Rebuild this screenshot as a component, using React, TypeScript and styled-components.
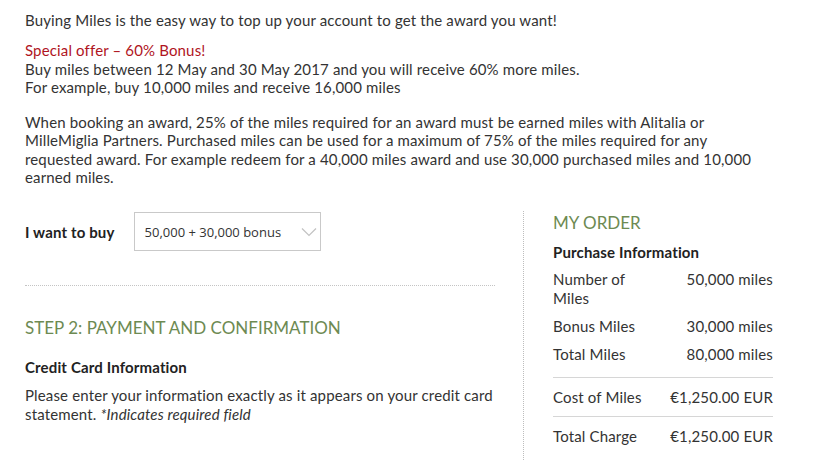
import React from 'react';
import styled, { createGlobalStyle } from 'styled-components';

const GlobalStyle = createGlobalStyle`
  body {
    margin: 0;
    background: #fff;
    font-family: Lato, "Open Sans", sans-serif;
    color: #333;
  }
`;

const Colors = {
  Text: '#333333',
  Green: '#6d8a52',
  Red: '#b0141e',
  Line: '#d6d6d6',
};

const Page = styled.div`
  padding: 11px 25px 0 25px;
  width: 770px;
  font-size: 15px;
  line-height: 18.3px;
  letter-spacing: 0.15px;
`;

const Para = styled.p<{ $gap?: number }>`
  margin: 0 0 ${(p) => p.$gap ?? 0}px 0;
  max-width: 735px;
`;

const Offer = styled.span`
  display: block;
  color: ${Colors.Red};
`;

const Columns = styled.div`
  display: flex;
  margin-top: 25px;
`;

const LeftCol = styled.div`
  width: 470px;
  padding-top: 1px;
`;

const RightCol = styled.div`
  margin-left: 28px;
  border-left: 1px dotted #bdbdbd;
  padding: 1px 0 0 29px;
  width: 220px;
  height: 260px;
`;

const BuyRow = styled.div`
  display: flex;
  align-items: center;
  gap: 19px;
  padding-bottom: 34px;
  border-bottom: 1px dotted #c4c4c4;
`;

const Label = styled.span`
  font-weight: 700;
  color: #222;
`;

const Select = styled.div`
  display: flex;
  align-items: center;
  justify-content: space-between;
  box-sizing: border-box;
  width: 187px;
  height: 39px;
  border: 1px solid #c9c9c9;
  padding: 0 3px 0 10px;
  font-family: "Open Sans", sans-serif;
  font-size: 13px;
  letter-spacing: 0;
  color: #333;
`;

const Heading = styled.h2<{ $top?: number }>`
  margin: ${(p) => p.$top ?? 0}px 0 0 0;
  font-weight: 400;
  font-size: 17px;
  line-height: 22px;
  letter-spacing: 0;
  color: ${Colors.Green};
`;

const SubHeading = styled.h3<{ $top?: number }>`
  margin: ${(p) => p.$top ?? 0}px 0 0 0;
  font-size: 15px;
  font-weight: 700;
  color: #222;
  line-height: 18px;
`;

const Note = styled.p`
  margin: 10px 0 0 0;
`;

const OrderTable = styled.div`
  display: grid;
  grid-template-columns: 100px 1fr;
  margin-top: 9px;
`;

const Cell = styled.div<{ $value?: boolean; $divider?: boolean; $space?: number }>`
  margin-top: ${(p) => p.$space ?? 0}px;
  padding: ${(p) => (p.$divider ? '10px' : '0')} 0 10px 0;
  text-align: ${(p) => (p.$value ? 'right' : 'left')};
  border-top: ${(p) => (p.$divider ? `1px solid ${Colors.Line}` : 'none')};
`;

const Chevron = () => (
  <svg width="16" height="10" viewBox="0 0 16 10" fill="none">
    <path d="M1 1.5 L8 8.5 L15 1.5" stroke="#c2c2c2" strokeWidth="1.2" />
  </svg>
);

const rows = [
  { label: 'Number of Miles', value: '50,000 miles' },
  { label: 'Bonus Miles', value: '30,000 miles' },
  { label: 'Total Miles', value: '80,000 miles' },
  { label: 'Cost of Miles', value: '€1,250.00 EUR', divider: true, space: 3 },
  { label: 'Total Charge', value: '€1,250.00 EUR', divider: true },
];

export default function App() {
  return (
    <>
      <GlobalStyle />
      <Page>
        <Para $gap={12}>
          Buying Miles is the easy way to top up your account to get the award you want!
        </Para>
        <Para $gap={17}>
          <Offer>Special offer – 60% Bonus!</Offer>
          Buy miles between 12 May and 30 May 2017 and you will receive 60% more miles.
          <br />
          For example, buy 10,000 miles and receive 16,000 miles
        </Para>
        <Para>
          When booking an award, 25% of the miles required for an award must be earned miles with
          Alitalia or MilleMiglia Partners. Purchased miles can be used for a maximum of 75% of the
          miles required for any requested award. For example redeem for a 40,000 miles award and
          use 30,000 purchased miles and 10,000 earned miles.
        </Para>
        <Columns>
          <LeftCol>
            <BuyRow>
              <Label>I want to buy</Label>
              <Select>
                50,000 + 30,000 bonus
                <Chevron />
              </Select>
            </BuyRow>
            <Heading $top={31}>STEP 2: PAYMENT AND CONFIRMATION</Heading>
            <SubHeading $top={19}>Credit Card Information</SubHeading>
            <Note>
              Please enter your information exactly as it appears on your credit card statement.{' '}
              <i>*Indicates required field</i>
            </Note>
          </LeftCol>
          <RightCol>
            <Heading>MY ORDER</Heading>
            <SubHeading $top={9}>Purchase Information</SubHeading>
            <OrderTable>
              {rows.map((r) => (
                <React.Fragment key={r.label}>
                  <Cell $divider={r.divider} $space={r.space}>{r.label}</Cell>
                  <Cell $value $divider={r.divider} $space={r.space}>{r.value}</Cell>
                </React.Fragment>
              ))}
            </OrderTable>
          </RightCol>
        </Columns>
      </Page>
    </>
  );
}
